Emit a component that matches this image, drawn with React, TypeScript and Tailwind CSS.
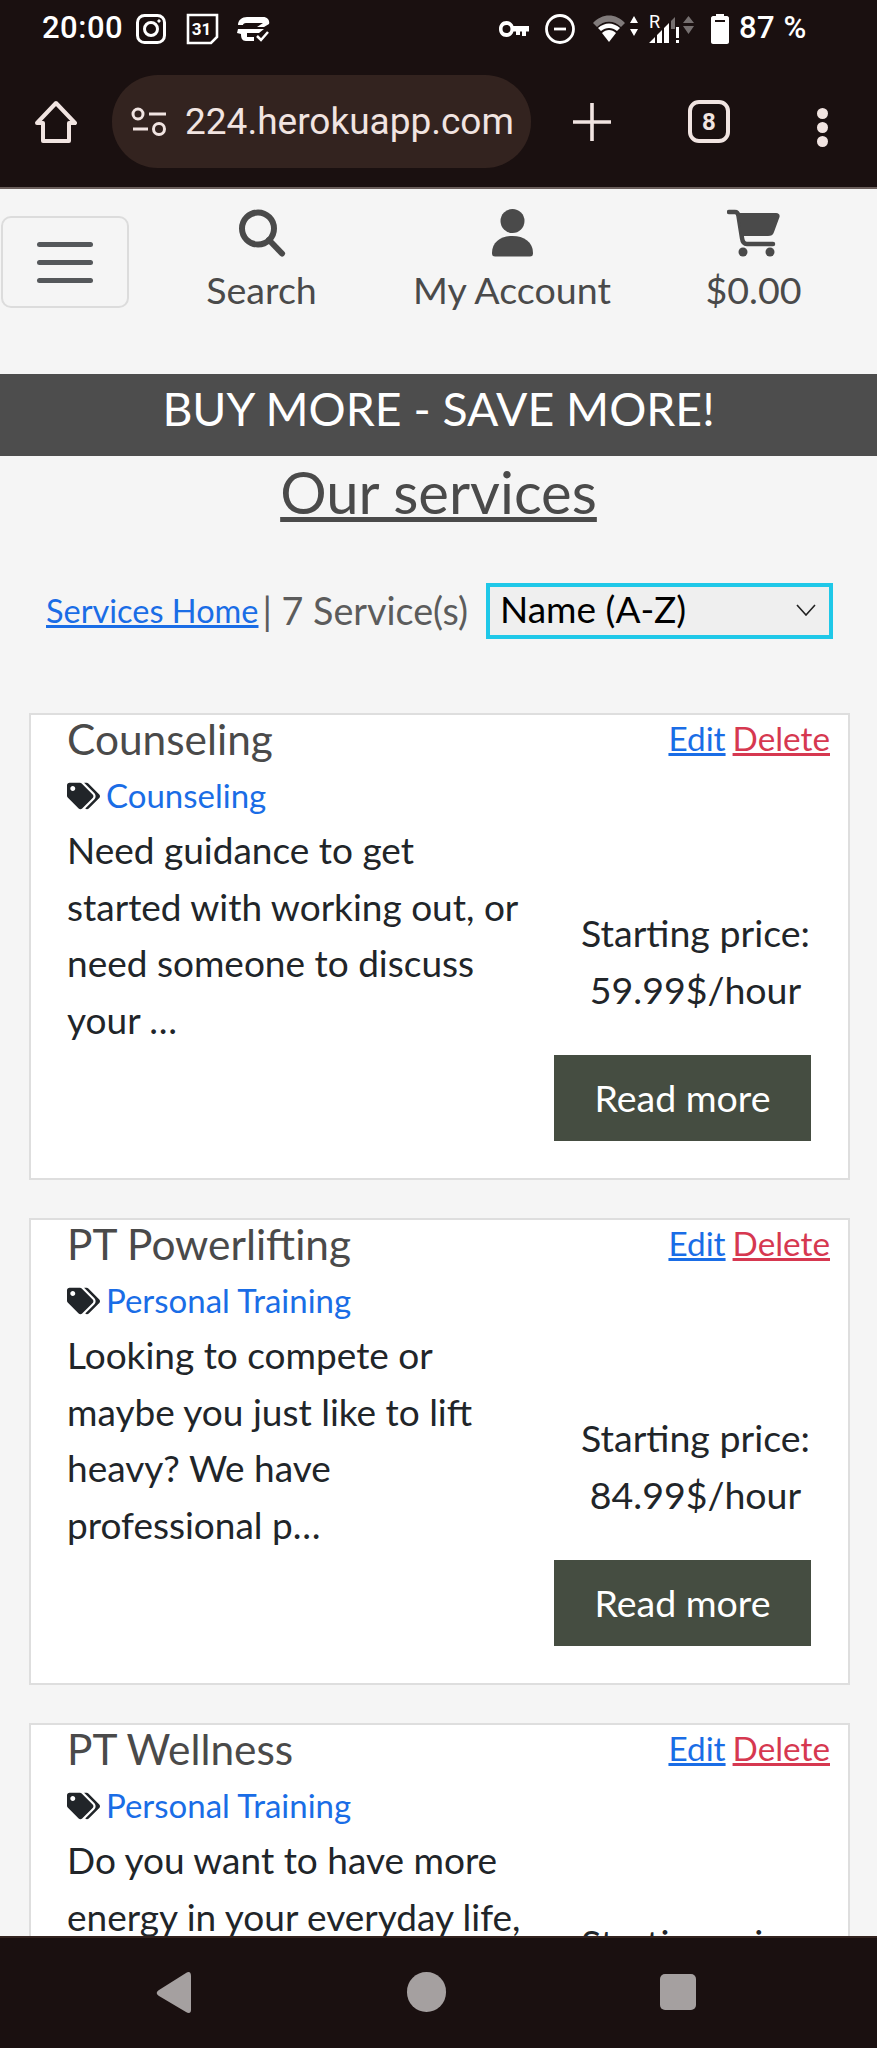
import { FaTags } from "react-icons/fa"

const services = [
    {
        title: "Counseling",
        category: "Counseling",
        lines: ["Need guidance to get", "started with working out, or", "need someone to discuss", "your …"],
        price: "59.99$/hour",
    },
    {
        title: "PT Powerlifting",
        category: "Personal Training",
        lines: ["Looking to compete or", "maybe you just like to lift", "heavy? We have", "professional p…"],
        price: "84.99$/hour",
    },
    {
        title: "PT Wellness",
        category: "Personal Training",
        lines: ["Do you want to have more", "energy in your everyday life,", "and feel better about", "yourself …"],
        price: "69.99$/hour",
    },
]

function StatusBar() {
    return (
        <div className="h-[60px] flex items-center text-white font-['Roboto',sans-serif] text-[31px] pb-[3px]">
            <span className="ml-[42px] w-[94px] font-medium tracking-[0.5px]">20:00</span>
            {/* instagram */}
            <svg width="30" height="30" viewBox="0 0 30 30" fill="none" stroke="white" strokeWidth="3">
                <rect x="1.5" y="1.5" width="27" height="27" rx="7" />
                <circle cx="15" cy="15" r="6.5" />
                <circle cx="23" cy="7" r="1.2" fill="white" strokeWidth="1" />
            </svg>
            {/* kalender */}
            <svg className="ml-[20px]" width="33" height="32" viewBox="0 0 33 32" fill="none" stroke="white" strokeWidth="2.6">
                <path d="M2 2H31V24L25 30H2Z" />
                <text x="15.5" y="22" fontSize="17" fontWeight="700" fill="white" stroke="none" textAnchor="middle" fontFamily="Roboto, sans-serif">31</text>
            </svg>
            <svg className="ml-[18px]" width="33" height="26" viewBox="0 0 33 26" fill="white">
                <path d="M10 1H26C31 1 33 5 32 8L27 11H20L26 7H9C7 7 6 8 6 9H1C1 4 5 1 10 1Z" />
                <path d="M1 13H27L22 17H10V21H17V25H9C5 25 4 22 4 18L0 17Z" />
                <path d="M20 20L24 24L31 16" fill="none" stroke="white" strokeWidth="2.5" />
            </svg>

            {/* rechte kant */}
            <svg className="ml-[229px]" width="30" height="16" viewBox="0 0 30 16" fill="white">
                <path fillRule="evenodd" d="M7.5 0C11 0 13.5 2 14.5 5H30V10.5H27V15H23V10.5H21V14H17V10.5H14.5C13.5 14 11 16 7.5 16C3 16 0 12.5 0 8C0 3.5 3 0 7.5 0ZM7.5 4C5 4 3.5 5.5 3.5 8C3.5 10.5 5 12 7.5 12C10 12 11.5 10.5 11.5 8C11.5 5.5 10 4 7.5 4Z" />
            </svg>
            <svg className="ml-[16px]" width="30" height="30" viewBox="0 0 30 30" fill="none" stroke="white" strokeWidth="2.8">
                <circle cx="15" cy="15" r="13.5" />
                <path d="M9 15H21" />
            </svg>
            <svg className="ml-[18px]" width="46" height="28" viewBox="0 0 46 28" fill="white">
                <path d="M0 8C9 -2 23 -2 32 8L28 12C21 5 11 5 4 12Z" opacity="0.45" />
                <path d="M5 13C12 7 20 7 27 13L24 16C19 12 13 12 8 16Z" />
                <path d="M9 18C13 14 19 14 23 18L16 27Z" />
                <path d="M41 1L45 8H37ZM41 21L45 14H37Z" />
            </svg>
            <svg className="ml-[10px] shrink-0" width="46" height="30" viewBox="0 0 46 30" fill="white">
                <path d="M0 29L6 23V29ZM8 21L13 16V29H8ZM15 14L20 9V29H15Z" />
                <path d="M22 7L26 3V15H22Z" opacity="0.4" />
                <rect x="27" y="13" width="3" height="11" />
                <rect x="27" y="26" width="3" height="3" />
                <path d="M39.5 2L45 9H34ZM39.5 20L45 12H34Z" opacity="0.4" />
                <text x="0" y="14" fontSize="18" fontFamily="Roboto, sans-serif">R</text>
            </svg>
            <svg className="ml-[16px]" width="18" height="31" viewBox="0 0 18 31" fill="white">
                <path d="M5 3V1H13V3H16C17 3 18 4 18 5V29C18 30 17 31 16 31H2C1 31 0 30 0 29V5C0 4 1 3 2 3ZM4 7V9H14V7Z" fillRule="evenodd" />
            </svg>
            <span className="ml-[10px] font-medium tracking-[0.5px] whitespace-nowrap">87 %</span>
        </div>
    )
}

function BrowserBar() {
    return (
        <div className="h-[129px] flex items-start text-[#f1e4e1] font-['Roboto',sans-serif] border-b-2 border-b-[#6b5f5c]">
            <svg className="ml-[35px] mt-[40px]" width="42" height="44" viewBox="0 0 42 44" fill="none" stroke="#f1e4e1" strokeWidth="4" strokeLinejoin="round">
                <path d="M21 3L40 23H34V41H8V23H2Z" />
            </svg>
            <div className="ml-[35px] mt-[15px] w-[419px] h-[93px] rounded-[46px] bg-[#33231f] flex items-center pl-[19px]">
                <svg width="36" height="30" viewBox="0 0 36 30" fill="none" stroke="#f1e4e1" strokeWidth="3">
                    <circle cx="7" cy="7" r="5" />
                    <path d="M18 7H35M2 22H17" />
                    <circle cx="28" cy="22" r="5.5" />
                </svg>
                <span className="ml-[18px] text-[37px] leading-none whitespace-nowrap">224.herokuapp.com</span>
            </div>
            <svg className="ml-[42px] mt-[43px]" width="38" height="38" viewBox="0 0 38 38" stroke="#f1e4e1" strokeWidth="3.6">
                <path d="M19 0V38M0 19H38" />
            </svg>
            <div className="ml-[77px] mt-[40px] w-[42px] h-[43px] rounded-[11px] border-[4px] border-[#f1e4e1] flex items-center justify-center text-[24px] font-bold">8</div>
            <div className="ml-[87px] mt-[48px] flex flex-col gap-[3px]">
                <div className="w-[11px] h-[11px] rounded-full bg-[#f1e4e1]" />
                <div className="w-[11px] h-[11px] rounded-full bg-[#f1e4e1]" />
                <div className="w-[11px] h-[11px] rounded-full bg-[#f1e4e1]" />
            </div>
        </div>
    )
}

function TopNav() {
    return (
        <div className="h-[185px] shrink-0 flex items-start text-[#4a4a4a] text-[37.6px]">
            <button className="ml-[1px] mt-[27px] w-[128px] h-[92px] rounded-[10px] border-2 border-[#dcdcdc] flex flex-col items-center justify-center gap-[13px]">
                <span className="block w-[56px] h-[5px] rounded bg-[#55585b]" />
                <span className="block w-[56px] h-[5px] rounded bg-[#55585b]" />
                <span className="block w-[56px] h-[5px] rounded bg-[#55585b]" />
            </button>
            <div className="w-[265px] mt-[20px] flex flex-col items-center">
                <svg width="48" height="48" viewBox="0 0 48 48" fill="none" stroke="#4a4a4a" strokeWidth="6">
                    <circle cx="20" cy="19.5" r="16" />
                    <path d="M31 31L44 44.5" strokeLinecap="round" />
                </svg>
                <span className="leading-[44px] mt-[11px]">Search</span>
            </div>
            <div className="w-[236px] mt-[20px] flex flex-col items-center">
                <svg width="41" height="48" viewBox="0 0 41 48" fill="#4a4a4a">
                    <circle cx="20.5" cy="12" r="12" />
                    <path d="M0 44C0 33 9 27 20.5 27C32 27 41 33 41 44C41 46.5 40 47.5 38 47.5H3C1 47.5 0 46.5 0 44Z" />
                </svg>
                <span className="leading-[44px] mt-[11px]">My Account</span>
            </div>
            <div className="w-[247px] mt-[20px] flex flex-col items-center">
                <svg width="53" height="48" viewBox="0 0 53 48" fill="#4a4a4a">
                    <path d="M2 3H8C10 3 11 4 11.5 7L15 29C15.5 33 17 35 20 35H46" fill="none" stroke="#4a4a4a" strokeWidth="4.5" strokeLinecap="round" />
                    <path d="M12 4H49C52 4 53 6 52.5 8L47 23C46 26 44 27 41 27H15Z" />
                    <circle cx="16" cy="43" r="4.5" />
                    <circle cx="43" cy="43" r="4.5" />
                </svg>
                <span className="leading-[44px] mt-[11px]">$0.00</span>
            </div>
        </div>
    )
}

function ServiceCard({ service }: { service: (typeof services)[number] }) {
    return (
        <div className="ml-[29px] mr-[27px] h-[467px] shrink-0 bg-white border-2 border-[#dedede] flex pl-[36px] pr-[18px]">
            <div className="w-[470px] shrink-0">
                <h2 className="text-[42.4px] leading-[48px] text-[#4a4a4a] whitespace-nowrap">{service.title}</h2>
                <div className="flex items-center mt-[9px] h-[48px]">
                    <FaTags className="w-[33px] h-[28px] text-[#212529]" />
                    <a href="#" className="ml-[6px] text-[33px] text-[#1a6de6]">{service.category}</a>
                </div>
                <div className="mt-[2px] text-[37px] leading-[56.5px] text-[#212529]">
                    {service.lines.map((line) => (
                        <div key={line}>{line}</div>
                    ))}
                </div>
            </div>
            <div className="flex-1 flex flex-col">
                <div className="flex justify-end gap-[7px] text-[33.3px] leading-[47px]">
                    <a href="#" className="underline text-[#1a6de6]">Edit</a>
                    <a href="#" className="underline text-[#d63850]">Delete</a>
                </div>
                <div className="mt-[142px] text-center text-[37.5px] leading-[57px] text-[#212529] pl-[24px]">
                    <div className="whitespace-nowrap">Starting price:</div>
                    <div>{service.price}</div>
                </div>
                <button className="mt-[37px] ml-[17px] w-[257px] h-[86px] bg-[#454d41] text-white text-[37.5px]">Read more</button>
            </div>
        </div>
    )
}

export default function App() {
    return (
        <div className="w-[877px] h-[2048px] overflow-hidden flex flex-col bg-[#f5f5f5] font-['Lato',sans-serif]">
            <div className="bg-[#1a1010] shrink-0">
                <StatusBar />
                <BrowserBar />
            </div>

            <div className="flex-1 min-h-0 overflow-hidden flex flex-col">
                <TopNav />
                <div className="h-[82px] shrink-0 bg-[#4d4d4d] text-white text-[46.4px] pb-[13px] flex items-center justify-center">
                    BUY MORE - SAVE MORE!
                </div>
                <h1 className="mt-[1px] h-[70px] shrink-0 text-center text-[58px] leading-[70px] underline text-[#4a4a4a]">Our services</h1>

                <div className="mt-[56px] h-[56px] shrink-0 flex items-center text-[37.7px] text-[#5c5c5c]">
                    <a href="#" className="ml-[46px] text-[32.5px] underline text-[#1a6de6]">Services Home</a>
                    <span className="ml-[4px] whitespace-nowrap">| 7 Service(s)</span>
                    <button className="ml-[18px] shrink-0 w-[347px] h-[56px] border-[4px] border-[#1fc8e8] bg-[#efefef] text-black text-[37px] leading-[44px] pl-[10px] pr-[13px] pb-[5px] flex items-center justify-between">
                        <span>Name (A-Z)</span>
                        <svg className="mt-[3px]" width="20" height="12" viewBox="0 0 20 12" fill="none" stroke="#222" strokeWidth="1.6">
                            <path d="M1 1L10 11L19 1" />
                        </svg>
                    </button>
                </div>

                <div className="mt-[74px] flex flex-col gap-[38px]">
                    {services.map((service) => (
                        <ServiceCard key={service.title} service={service} />
                    ))}
                </div>
            </div>

            {/* android navigatie */}
            <div className="h-[112px] shrink-0 bg-[#1a1010] border-t-2 border-t-[#33231f] flex items-start">
                <svg className="ml-[156px] mt-[34px]" width="36" height="42" viewBox="0 0 36 42" fill="#a5a0a0">
                    <path d="M30 1C33 -1 35 0 35 4V38C35 41 33 42 30 40L3 24C0 22 0 20 3 18Z" />
                </svg>
                <div className="ml-[215px] mt-[34px] w-[39px] h-[40px] rounded-full bg-[#a5a0a0]" />
                <div className="ml-[214px] mt-[36px] w-[36px] h-[36px] rounded-[5px] bg-[#a5a0a0]" />
            </div>
        </div>
    )
}
